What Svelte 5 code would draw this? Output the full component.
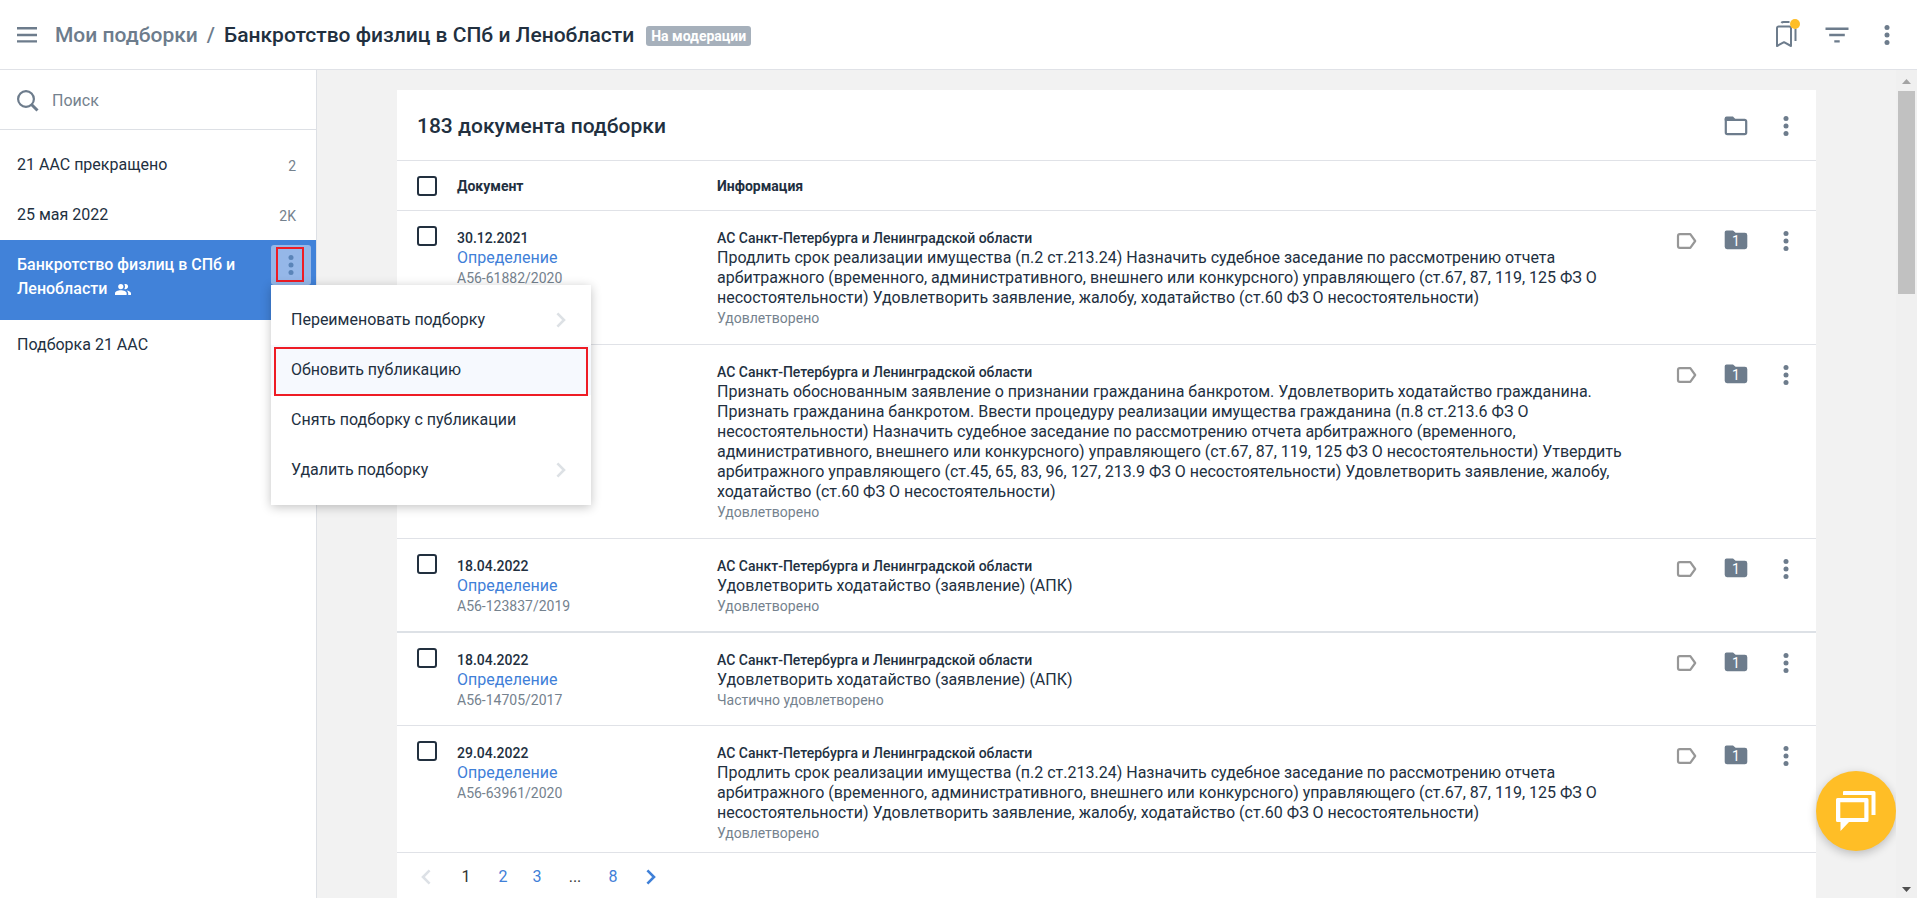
<script>
  const collections = [
    { name: '21 ААС прекращено', count: '2' },
    { name: '25 мая 2022', count: '2K' },
    { name: 'Банкротство физлиц в СПб и Ленобласти', active: true },
    { name: 'Подборка 21 ААС', count: '' }
  ];

  const menu = [
    { label: 'Переименовать подборку', nested: true },
    { label: 'Обновить публикацию', current: true },
    { label: 'Снять подборку с публикации' },
    { label: 'Удалить подборку', nested: true }
  ];

  const court = 'АС Санкт-Петербурга и Ленинградской области';
  const prolong =
    'Продлить срок реализации имущества (п.2 ст.213.24) Назначить судебное заседание по рассмотрению отчета арбитражного (временного, административного, внешнего или конкурсного) управляющего (ст.67, 87, 119, 125 ФЗ О несостоятельности) Удовлетворить заявление, жалобу, ходатайство (ст.60 ФЗ О несостоятельности)';
  const recognise =
    'Признать обоснованным заявление о признании гражданина банкротом. Удовлетворить ходатайство гражданина. Признать гражданина банкротом. Ввести процедуру реализации имущества гражданина (п.8 ст.213.6 ФЗ О несостоятельности) Назначить судебное заседание по рассмотрению отчета арбитражного (временного, административного, внешнего или конкурсного) управляющего (ст.67, 87, 119, 125 ФЗ О несостоятельности) Утвердить арбитражного управляющего (ст.45, 65, 83, 96, 127, 213.9 ФЗ О несостоятельности) Удовлетворить заявление, жалобу, ходатайство (ст.60 ФЗ О несостоятельности)';
  const petition = 'Удовлетворить ходатайство (заявление) (АПК)';

  const documents = [
    { date: '30.12.2021', number: 'А56-61882/2020', text: prolong, result: 'Удовлетворено' },
    { date: '', number: '', text: recognise, result: 'Удовлетворено' },
    { date: '18.04.2022', number: 'А56-123837/2019', text: petition, result: 'Удовлетворено', mark: 'thick' },
    { date: '18.04.2022', number: 'А56-14705/2017', text: petition, result: 'Частично удовлетворено', mark: 'tight' },
    { date: '29.04.2022', number: 'А56-63961/2020', text: prolong, result: 'Удовлетворено', mark: 'last' }
  ];
</script>

{#snippet dots()}
  <svg width="24" height="24" viewBox="0 0 24 24" fill="currentColor" aria-hidden="true">
    <circle cx="12" cy="4.5" r="2.5" /><circle cx="12" cy="12" r="2.5" /><circle cx="12" cy="19.5" r="2.5" />
  </svg>
{/snippet}

{#snippet chevron()}
  <svg class="chevron" width="10" height="16" viewBox="0 0 10 16" fill="none" stroke="currentColor" stroke-width="2.6" aria-hidden="true">
    <path d="M1.4 1.4 8 8l-6.600 6.600" />
  </svg>
{/snippet}

<div class="app">
  <header class="topbar">
    <button class="icon" aria-label="Меню">
      <svg width="20" height="16" viewBox="0 0 20 16" fill="currentColor"><path d="M0 0h20v2.400H0zM0 6.800h20v2.400H0zM0 13.200h20v2.400H0z" /></svg>
    </button>
    <h1><a href="#collections">Мои подборки</a><span class="slash">/</span>Банкротство физлиц в СПб и Ленобласти</h1>
    <span class="badge">На модерации</span>
    <div class="tools">
      <button class="icon" aria-label="Закладки">
        <svg width="26" height="32" viewBox="0 0 26 32" fill="none" stroke="currentColor" stroke-width="2">
          <path d="M3 27V9.200a1.600 1.600 0 0 1 1.600-1.600h10.800a1.600 1.600 0 0 1 1.600 1.600V27l-7-3.800z" stroke-linejoin="round" />
          <path d="M7.300 3.800Q8 3 9.500 3h6M21.500 9.500V22" />
          <circle cx="21" cy="5" r="5" fill="#ffbe26" stroke="none" />
        </svg>
      </button>
      <button class="icon" aria-label="Фильтр">
        <svg width="24" height="16" viewBox="0 0 24 16" fill="currentColor"><path d="M.5.400h23v2.500H.500zM4.200 6.800h15.600v2.400H4.200zM9.300 13.200h5.400v2.400H9.300z" /></svg>
      </button>
      <button class="icon" aria-label="Ещё">{@render dots()}</button>
    </div>
  </header>

  <div class="body">
    <aside>
      <label class="search">
        <svg width="22" height="22" viewBox="0 0 22 22" fill="none" stroke="currentColor" aria-hidden="true">
          <circle cx="9" cy="9" r="7.900" stroke-width="2.200" /><path d="m14.500 14.500 6 6" stroke-width="3" />
        </svg>
        <input type="text" placeholder="Поиск" aria-label="Поиск" />
      </label>
      <ul class="collections">
        {#each collections as item}
          <li class:active={item.active}>
            <a href="#collection">{item.name}{#if item.active}
                <svg class="people" width="16" height="11" viewBox="0 0 16 11" fill="currentColor" aria-hidden="true">
                  <circle cx="5.800" cy="2.600" r="2.600" /><path d="M0 11V9.200C0 7.300 3 6.300 5.800 6.300s5.800 1 5.800 2.900V11z" />
                  <path d="M9.300.300a2.600 2.600 0 1 1 0 4.600 4.200 4.200 0 0 0 0-4.600zM11.500 6.400c2.200.300 4.500 1.200 4.500 2.800V11h-2.800V9.200c0-1.200-.7-2.100-1.700-2.800z" />
                </svg>{/if}</a>
            {#if item.active}
              <div class="more">
                <button class="more-button" aria-label="Действия с подборкой"><span class="frame"></span>{@render dots()}</button>
                <div class="menu" role="menu">
                  {#each menu as entry}
                    <button role="menuitem" class:current={entry.current}>
                      {entry.label}
                      {#if entry.nested}{@render chevron()}{/if}
                    </button>
                  {/each}
                </div>
              </div>
            {:else}
              <span class="count">{item.count}</span>
            {/if}
          </li>
        {/each}
      </ul>
    </aside>

    <main>
      <section class="card">
        <div class="card-head">
          <h2>183 документа подборки</h2>
          <button class="icon" aria-label="Папка">
            <svg width="24" height="20" viewBox="0 0 24 20" fill="none" stroke="currentColor" stroke-width="2.200">
              <path d="M1.800 3v13.500a1.600 1.600 0 0 0 1.600 1.600h17.200a1.600 1.600 0 0 0 1.600-1.600V5.400a1.600 1.600 0 0 0-1.600-1.600H1.800" />
              <path d="M.700 4.500V2.300Q.700.500 2.500.500H9l2.500 2.800v1.300z" fill="currentColor" stroke="none" />
            </svg>
          </button>
          <button class="icon" aria-label="Ещё">{@render dots()}</button>
        </div>
        <table>
          <colgroup><col class="c-check" /><col class="c-doc" /><col /><col class="c-actions" /></colgroup>
          <thead>
            <tr>
              <th><input type="checkbox" aria-label="Выбрать все" /></th>
              <th>Документ</th>
              <th>Информация</th>
              <th></th>
            </tr>
          </thead>
          <tbody>
            {#each documents as doc}
              <tr class={doc.mark}>
                <td class="check"><input type="checkbox" aria-label="Выбрать документ" /></td>
                <td>
                  {#if doc.date}
                    <p class="strong">{doc.date}</p>
                    <p class="text"><a href="#document">Определение</a></p>
                    <p class="muted">{doc.number}</p>
                  {/if}
                </td>
                <td class="info">
                  <p class="strong">{court}</p>
                  <p class="text">{doc.text}</p>
                  <p class="muted">{doc.result}</p>
                </td>
                <td class="actions">
                  <div>
                    <button class="icon label" aria-label="Метка">
                      <svg width="22" height="16" viewBox="0 0 22 16" fill="none" stroke="currentColor" stroke-width="2.200"><path d="M3 3a1.800 1.800 0 0 1 1.800-1.800h10.500L20.200 8l-4.900 6.800H4.800A1.800 1.800 0 0 1 3 13z" stroke-linejoin="round" /></svg>
                    </button>
                    <button class="icon" aria-label="Папки: 1">
                      <span class="folder">
                        <svg width="24" height="20" viewBox="0 0 24 20" fill="currentColor" aria-hidden="true"><path d="M.700 2.300Q.700.500 2.500.500H9l2.600 2.300h9.300a2.400 2.400 0 0 1 2.400 2.400v11.600a2.400 2.400 0 0 1-2.400 2.400H3.100a2.400 2.400 0 0 1-2.400-2.400z" /></svg>
                        <span>1</span>
                      </span>
                    </button>
                    <button class="icon" aria-label="Ещё">{@render dots()}</button>
                  </div>
                </td>
              </tr>
            {/each}
          </tbody>
        </table>
        <nav class="pages" aria-label="Страницы">
          <button class="prev" aria-label="Назад" disabled>{@render chevron()}</button>
          <span class="now">1</span>
          <a href="#p2">2</a>
          <a href="#p3">3</a>
          <span class="gap">...</span>
          <a href="#p8">8</a>
          <button class="next" aria-label="Вперёд">{@render chevron()}</button>
        </nav>
      </section>
      <button class="chat" aria-label="Чат">
        <svg width="40" height="40" viewBox="0 0 40 40" fill="#fff">
          <path d="M8 0h30a1.500 1.500 0 0 1 1.500 1.500V24h-4V4H7V1a1 1 0 0 1 1-1z" />
          <path fill-rule="evenodd" d="M1.500 7h29.500a1.500 1.500 0 0 1 1.500 1.500v21A1.500 1.500 0 0 1 31 31H13l-8.500 9v-9h-3A1.500 1.500 0 0 1 0 29.500v-21A1.500 1.500 0 0 1 1.500 7zm2.800 4.200v15.800h24V11.200z" />
        </svg>
      </button>
    </main>

    <div class="scrollbar" aria-hidden="true">
      <i class="up"></i><i class="thumb"></i><i class="down"></i>
    </div>
  </div>
</div>

<style>
  :global(body) { margin: 0; }
  .app {
    display: flex;
    flex-direction: column;
    height: 100vh;
    overflow: hidden;
    background: #fff;
    color: #22303f;
    font: 400 16px/20px Roboto, sans-serif;
  }
  .app :global(*) { box-sizing: border-box; }
  button {
    border: 0;
    padding: 0;
    background: none;
    color: inherit;
    font: inherit;
    cursor: pointer;
  }
  svg { display: block; flex: none; }
  a { color: #3f80d8; text-decoration: none; }
  p, h1, h2, ul { margin: 0; padding: 0; }
  .icon {
    display: flex;
    align-items: center;
    justify-content: center;
    flex: none;
    width: 50px;
    height: 50px;
    color: #6d7c8c;
  }

  .topbar {
    display: flex;
    align-items: center;
    flex: none;
    height: 70px;
    padding: 0 5px 0 2px;
    border-bottom: 1px solid #e0e2e7;
  }
  h1, h2 { font-size: 21px; font-weight: 500; line-height: 24px; }
  h1 { padding-left: 3px; white-space: nowrap; }
  h1 a, .slash { color: #6d7c8c; }
  .slash { margin: 0 9px; }
  .badge {
    margin: 2px 0 0 12px;
    padding: 0 5px;
    border-radius: 3px;
    background: #a6b0bb;
    color: #fff;
    font-size: 14px;
    font-weight: 700;
    line-height: 20px;
  }
  .tools { display: flex; margin-left: auto; }

  .body { display: flex; flex: 1; min-height: 0; }
  aside { flex: none; width: 317px; border-right: 1px solid #dde0e5; }
  .search {
    display: flex;
    align-items: center;
    gap: 13px;
    height: 60px;
    padding: 2px 0 0 17px;
    border-bottom: 1px solid #dde0e5;
    color: #6d7c8c;
  }
  .search input {
    flex: 1;
    min-width: 0;
    border: 0;
    padding: 0;
    outline: 0;
    background: none;
    color: #22303f;
    font: inherit;
  }
  .search input::placeholder { color: #75828e; opacity: 1; }
  .collections { padding-top: 10px; list-style: none; }
  li {
    display: flex;
    justify-content: space-between;
    min-height: 50px;
    padding: 13px 20px 11px 17px;
  }
  li a { color: #22303f; line-height: 24px; }
  .count { color: #75828e; font-size: 14px; line-height: 26px; }
  li.active { min-height: 80px; padding: 5px 5px 15px 17px; background: #4182d9; }
  li.active a { width: 225px; padding-top: 8px; color: #fff; font-weight: 500; }
  .people { display: inline-block; margin-left: 8px; vertical-align: -1px; }

  .more { position: relative; width: 40px; height: 40px; }
  .more-button {
    display: flex;
    align-items: center;
    justify-content: center;
    width: 40px;
    height: 40px;
    border-radius: 3px;
    background: #95b7e8;
    color: #5a84b8;
  }
  .frame {
    position: absolute;
    top: 2px;
    left: 5px;
    width: 28px;
    height: 35px;
    border: 2px solid #ee1c25;
  }
  .menu {
    position: absolute;
    z-index: 2;
    top: 40px;
    left: 0;
    width: 320px;
    padding: 10px 0;
    background: #fff;
    box-shadow: 0 2px 10px rgba(0, 0, 0, 0.24);
  }
  .menu button {
    position: relative;
    display: flex;
    align-items: center;
    justify-content: space-between;
    width: 100%;
    height: 50px;
    padding: 0 25px 0 20px;
  }
  .menu .chevron { color: #dde1e5; }
  .menu .current { background: #f6f9fe; }
  .menu .current::after {
    content: '';
    position: absolute;
    inset: 2px 3px -1px;
    border: 2px solid #ee1c25;
  }

  main {
    position: relative;
    flex: 1;
    min-width: 0;
    padding: 20px 80px 0;
    overflow: hidden;
    background: #f2f2f2;
  }
  .card { background: #fff; }
  .card-head {
    display: flex;
    align-items: center;
    height: 71px;
    padding: 2px 5px 0 20px;
    border-bottom: 1px solid #e0e2e7;
  }
  .card-head h2 { flex: 1; }
  table { width: 100%; table-layout: fixed; border-collapse: separate; border-spacing: 0; }
  .c-check { width: 60px; }
  .c-doc { width: 260px; }
  .c-actions { width: 155px; }
  th {
    height: 50px;
    padding: 0;
    border-bottom: 1px solid #e0e2e7;
    font-size: 14px;
    font-weight: 700;
    text-align: left;
  }
  td { padding: 17px 0 16px; border-bottom: 1px solid #e0e2e7; vertical-align: top; }
  .thick td { padding-bottom: 15px; border-bottom: 2px solid #dde1e6; }
  .tight td { padding-bottom: 15px; }
  .last td { padding-bottom: 9px; }
  tbody .check { padding: 15px 0 0; }
  th:first-child, td:first-child { padding-left: 20px; }
  .info { padding-right: 10px; }
  tbody .actions { padding: 5px 5px 0 0; }
  .actions div { display: flex; }
  input[type='checkbox'] {
    appearance: none;
    display: block;
    width: 20px;
    height: 20px;
    margin: 0;
    border: 2px solid #22303f;
    border-radius: 3px;
    background: #fff;
  }
  .strong { font-size: 14px; font-weight: 500; }
  .muted { color: #75828e; font-size: 14px; }
  .label { color: #979797; }
  .folder { display: grid; }
  .folder svg, .folder span { grid-area: 1 / 1; }
  .folder span { color: #fff; font-size: 14px; line-height: 22px; }

  .pages { display: flex; align-items: center; height: 48px; padding-left: 24px; }
  .pages button, .pages a, .pages span {
    display: flex;
    justify-content: center;
    flex: none;
    width: 34px;
    line-height: 20px;
  }
  .pages .prev { width: 10px; color: #dde1e6; }
  .prev .chevron { transform: scaleX(-1); }
  .pages .now { width: 40px; margin-left: 15px; color: #333; }
  .pages .gap { width: 42px; color: #333; }
  .pages .next { width: 42px; color: #3f80d8; }

  .chat {
    position: absolute;
    right: 0;
    bottom: 47px;
    display: flex;
    align-items: center;
    justify-content: center;
    width: 80px;
    height: 80px;
    border-radius: 50%;
    background: #ffbe26;
    box-shadow: 0 3px 10px rgba(0, 0, 0, 0.22);
  }

  .scrollbar {
    display: flex;
    flex-direction: column;
    align-items: center;
    flex: none;
    width: 21px;
    padding: 9px 0 6px;
    background: #f0f0f0;
  }
  .scrollbar i { flex: none; }
  .up, .down { width: 9px; height: 5px; background: #a3a3a3; clip-path: polygon(50% 0, 100% 100%, 0 100%); }
  .thumb { width: 17px; height: 203px; margin-top: 7px; background: #c1c1c1; }
  .down { margin-top: auto; background: #505050; clip-path: polygon(0 0, 100% 0, 50% 100%); }
</style>
